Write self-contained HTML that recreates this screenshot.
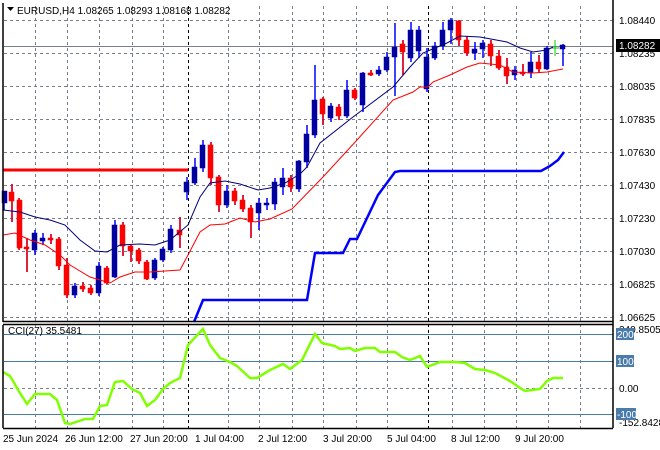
<!DOCTYPE html><html><head><style>body{margin:0;background:#fff;width:660px;height:450px;overflow:hidden}svg{display:block;font-family:"Liberation Sans",sans-serif}</style></head><body>
<svg width="660" height="450" xmlns="http://www.w3.org/2000/svg">
<g stroke="#78808c" stroke-dasharray="3,3" stroke-width="1">
<path d="M4 20.5H613M4 53.5H613M4 86.5H613M4 119.5H613M4 152.5H613M4 185.5H613M4 218.5H613M4 251.5H613M4 284.5H613M4 317.5H613M4 388.5H613"/>
<path d="M35.5 0V428M67.5 0V428M99.5 0V428M132.5 0V428M163.5 0V428M228.5 0V428M259.5 0V428M292.5 0V428M323.5 0V428M356.5 0V428M387.5 0V428M452.5 0V428M484.5 0V428M516.5 0V428M548.5 0V428M580.5 0V428"/>
</g>
<path d="M188.5 0V428M428.5 0V428" stroke="#000" stroke-dasharray="3,3"/>
<path d="M4 46.5H613" stroke="#78808c"/>
<path d="M4 334.5H613M4 361.5H613M4 414.5H613" stroke="#4a7bab"/>
<path d="M3 170H188" stroke="#f00" stroke-width="3"/>
<g stroke="#00f" stroke-width="1.5">
<path d="M4 195V210M12 184V222M19 198V250M27 238V272M35 230V255M43 233V245M51 234V244M59 237V270M67 258V298M75 283V298M83 282V292M91 285V295M99 262V296M107 266V284M115 220V278M123 222V256M131 245V262M139 248V264M147 260V280M155 258V280M163 247V262M171 225V253M180 217V248M187 177V200M195 158V185M203 140V172M211 142V185M219 175V212M227 185V208M235 188V205M243 195V212M251 205V238M259 198V230M267 198V210M275 178V210M283 168V195M291 175V192M299 160V192M307 125V168M315 65V138M323 97V125M331 103V122M339 104V120M347 80V118M355 88V100M363 72V112M371 70V76M379 66V76M387 52V72M395 23V96M403 40V75M411 22V62M419 26V58M427 48V92M435 42V60M443 22V50M451 18V44M459 20V46M467 36V56M475 42V60M483 40V58M491 40V66M499 50V70M507 58V84M515 66V80M523 64V76M531 52V78M539 55V73M547 46V70M563 44V66"/>
</g>
<path d="M12 184V222M19 198V250M27 238V272M51 234V244M59 237V270M67 258V298M83 282V292M91 285V295M107 266V284M123 222V256M131 245V262M139 248V264M147 260V280M180 217V248M211 142V185M219 175V212M235 188V205M243 195V212M251 205V238M291 175V192M323 97V125M339 104V120M355 88V100M371 70V76M403 40V75M459 20V46M467 36V56M491 40V66M499 50V70M507 58V84M523 64V76M539 55V73" stroke="#f00" stroke-width="1.5"/>
<g fill="#0000a0" stroke="#0000a0" stroke-width="0.5">
<rect x="2" y="191" width="5" height="12"/><rect x="32" y="233" width="5" height="17"/><rect x="40" y="238" width="5" height="3"/><rect x="72" y="286" width="5" height="9"/><rect x="96" y="266" width="5" height="27"/><rect x="112" y="225" width="5" height="52"/><rect x="152" y="260" width="5" height="18"/><rect x="160" y="249" width="5" height="11"/><rect x="168" y="229" width="5" height="21"/><rect x="184" y="182" width="5" height="10"/><rect x="192" y="167" width="5" height="16"/><rect x="200" y="145" width="5" height="23"/><rect x="224" y="191" width="5" height="14"/><rect x="256" y="203" width="5" height="10"/><rect x="264" y="203" width="5" height="2"/><rect x="272" y="182" width="5" height="22"/><rect x="280" y="178" width="5" height="9"/><rect x="296" y="161" width="5" height="28"/><rect x="304" y="134" width="5" height="28"/><rect x="312" y="100" width="5" height="35"/><rect x="328" y="106" width="5" height="12"/><rect x="344" y="90" width="5" height="26"/><rect x="360" y="73" width="5" height="32"/><rect x="376" y="70" width="5" height="4"/><rect x="384" y="57" width="5" height="13"/><rect x="392" y="47" width="5" height="10"/><rect x="408" y="30" width="5" height="28"/><rect x="416" y="30" width="5" height="21"/><rect x="424" y="57" width="5" height="32"/><rect x="432" y="46" width="5" height="12"/><rect x="440" y="30" width="5" height="16"/><rect x="448" y="20" width="5" height="10"/><rect x="472" y="49" width="5" height="4"/><rect x="480" y="43" width="5" height="6"/><rect x="512" y="70" width="5" height="5"/><rect x="528" y="62" width="5" height="11"/><rect x="544" y="48" width="5" height="21"/><rect x="560" y="45" width="5" height="4"/>
</g>
<g fill="#f00" stroke="#f00" stroke-width="0.5">
<rect x="9" y="192" width="5" height="9"/><rect x="17" y="200" width="5" height="48"/><rect x="24" y="247" width="5" height="2"/><rect x="48" y="238" width="5" height="2"/><rect x="56" y="239" width="5" height="27"/><rect x="64" y="265" width="5" height="30"/><rect x="80" y="286" width="5" height="3"/><rect x="88" y="288" width="5" height="5"/><rect x="104" y="268" width="5" height="15"/><rect x="120" y="225" width="5" height="21"/><rect x="128" y="246" width="5" height="5"/><rect x="136" y="250" width="5" height="11"/><rect x="144" y="262" width="5" height="17"/><rect x="177" y="230" width="5" height="5"/><rect x="208" y="145" width="5" height="33"/><rect x="216" y="177" width="5" height="28"/><rect x="232" y="191" width="5" height="10"/><rect x="240" y="200" width="5" height="9"/><rect x="248" y="208" width="5" height="14"/><rect x="288" y="178" width="5" height="9"/><rect x="320" y="99" width="5" height="15"/><rect x="336" y="107" width="5" height="9"/><rect x="352" y="90" width="5" height="8"/><rect x="368" y="73" width="5" height="2"/><rect x="400" y="44" width="5" height="8"/><rect x="456" y="21" width="5" height="19"/><rect x="464" y="40" width="5" height="13"/><rect x="488" y="44" width="5" height="12"/><rect x="496" y="56" width="5" height="12"/><rect x="504" y="67" width="5" height="9"/><rect x="520" y="72" width="5" height="2"/><rect x="536" y="62" width="5" height="7"/>
</g>
<path d="M555 40V56M551 48H559" stroke="#0c0"/>
<polyline fill="none" stroke="#00007a" stroke-width="1" points="3,210 20,212 35,217 50,220 65,225 80,240 95,251 107,252 120,245 140,244 155,245 170,240 188,225 200,197 210,183 225,181 240,184 258,190 270,188 285,183 300,174 307,167 320,143 353,117 393,87 410,67 423,53 447,43 460,36 480,37 507,42 520,48 533,52 547,50 553,47"/>
<polyline fill="none" stroke="#f00" stroke-width="1" points="3,235 15,233 30,240 45,245 60,255 70,265 90,277 110,283 120,277 135,272 150,272 165,271 180,270 188,255 200,232 210,225 225,224 240,218 255,222 270,219 292,209 323,177 357,140 393,100 413,92 420,87 428,87 433,82 450,75 467,67 480,63 500,65 513,72 533,73 547,72 563,69"/>
<polyline fill="none" stroke="#00f" stroke-width="2.5" points="194,322 203,300 307,300 315,253 343,253 350,239 357,239 378,195 395,172 400,171 541,171 550,166 558,160 564,152"/>
<polyline fill="none" stroke="#7fff00" stroke-width="2.5" points="3,372 10,376 20,393 27,404 35,394 50,394 57,400 65,423 70,424 85,419 93,419 100,406 107,405 115,382 123,381 132,389 140,393 147,406 155,400 163,389 170,383 180,378 188,345 203,329 210,345 220,358 230,362 237,366 250,378 257,378 270,370 283,364 290,369 302,360 315,334 322,343 335,346 340,349 350,348 355,351 365,348 375,348 380,352 395,352 402,357 410,360 420,356 427,367 440,362 455,362 465,363 475,369 485,370 495,373 510,381 520,388 525,391 532,390 540,389 547,381 553,378 563,378"/>
<rect x="0" y="0" width="660" height="3" fill="#fff"/>
<path d="M3 3V322M613 0V428M3 321.5H613M3 324.5H613M3 325V428M3 428.5H613" stroke="#000" stroke-width="1.5"/>
<g font-size="10" fill="#000">
<path d="M7 7h7l-3.5 4z" fill="#000"/>
<text x="17" y="14">EURUSD,H4  1.08265 1.08293 1.08168 1.08282</text>
<text x="8" y="334">CCI(27) 35.5481</text>
<text x="619" y="24">1.08440</text><text x="619" y="57">1.08235</text><text x="619" y="90">1.08035</text><text x="619" y="123">1.07835</text><text x="619" y="156">1.07630</text><text x="619" y="189">1.07430</text><text x="619" y="222">1.07230</text><text x="619" y="255">1.07030</text><text x="619" y="288">1.06825</text><text x="619" y="321">1.06625</text>
<text x="619" y="333">240.8505</text><text x="619" y="392">0.00</text><text x="619" y="426">-152.8428</text>
<text x="3" y="442">25 Jun 2024</text><text x="65" y="442">26 Jun 12:00</text><text x="130" y="442">27 Jun 20:00</text><text x="195" y="442">1 Jul 04:00</text><text x="258" y="442">2 Jul 12:00</text><text x="323" y="442">3 Jul 20:00</text><text x="387" y="442">5 Jul 04:00</text><text x="451" y="442">8 Jul 12:00</text><text x="515" y="442">9 Jul 20:00</text>
</g>
<rect x="616" y="39" width="44" height="13" fill="#000"/><text x="619" y="49" font-size="10" fill="#fff">1.08282</text>
<g font-size="10" fill="#fff"><rect x="616" y="328" width="18" height="12" fill="#4a7bab"/><text x="617" y="338">200</text><rect x="616" y="355" width="18" height="12" fill="#4a7bab"/><text x="617" y="365">100</text><rect x="616" y="408" width="20" height="12" fill="#4a7bab"/><text x="617" y="418">-100</text></g>
</svg></body></html>
